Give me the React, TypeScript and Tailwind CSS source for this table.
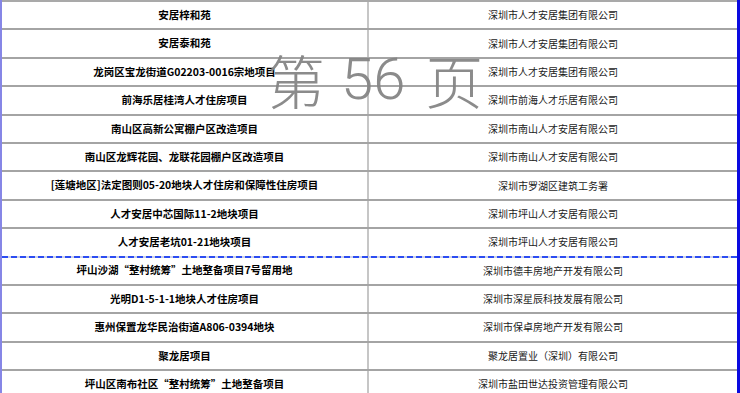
const rows: [string, string][] = [
  ["安居梓和苑", "深圳市人才安居集团有限公司"],
  ["安居泰和苑", "深圳市人才安居集团有限公司"],
  ["龙岗区宝龙街道G02203-0016宗地项目", "深圳市人才安居集团有限公司"],
  ["前海乐居桂湾人才住房项目", "深圳市前海人才乐居有限公司"],
  ["南山区高新公寓棚户区改造项目", "深圳市南山人才安居有限公司"],
  ["南山区龙辉花园、龙联花园棚户区改造项目", "深圳市南山人才安居有限公司"],
  ["[莲塘地区]法定图则05-20地块人才住房和保障性住房项目", "深圳市罗湖区建筑工务署"],
  ["人才安居中芯国际11-2地块项目", "深圳市坪山人才安居有限公司"],
  ["人才安居老坑01-21地块项目", "深圳市坪山人才安居有限公司"],
  ["坪山沙湖“整村统筹”土地整备项目7号留用地", "深圳市德丰房地产开发有限公司"],
  ["光明D1-5-1-1地块人才住房项目", "深圳市深星辰科技发展有限公司"],
  ["惠州保置龙华民治街道A806-0394地块", "深圳市保卓房地产开发有限公司"],
  ["聚龙居项目", "聚龙居置业（深圳）有限公司"],
  ["坪山区南布社区“整村统筹”土地整备项目", "深圳市盐田世达投资管理有限公司"],
];

const PageBreak = () => (
  <div className="h-[2px] w-full bg-[repeating-linear-gradient(90deg,#2b4cf2_0px,#2b4cf2_6px,#cfd3e6_6px,#cfd3e6_9px)]" />
);

export default function App() {
  return (
    <div className="relative w-[740px] h-[393px] overflow-hidden bg-white border-l-2 border-l-[#8686e6] border-r-[3px] border-r-[#0a0ae0] font-['Noto_Sans_CJK_SC',sans-serif]">
      <div className="border-t-2 border-[#a9a9a9]">
        {rows.map(([project, company], i) => (
          <div key={i}>
            <div
              className={`flex ${i === 8 ? "h-[26.4px]" : "h-[28.4px] border-b-2 border-[#a4a4a4]"}`}
            >
              <div className="w-[367px] flex items-center justify-center border-r-2 border-[#c6c6c6] text-[10.5px] font-bold text-black leading-none">
                {project}
              </div>
              <div className="flex-1 flex items-center justify-center text-[10px] text-[#1a1a1a] leading-none">
                {company}
              </div>
            </div>
            {i === 8 && <PageBreak />}
          </div>
        ))}
      </div>
      {/* watermark */}
      <div className="absolute left-[265px] top-[50px] pointer-events-none select-none flex items-center text-[58px] font-light leading-none text-[#858585] opacity-95">
        <span>第</span>
        <span className="ml-[16px] font-['Roboto',sans-serif] font-light">56</span>
        <span className="ml-[20px]">页</span>
      </div>
    </div>
  );
}
